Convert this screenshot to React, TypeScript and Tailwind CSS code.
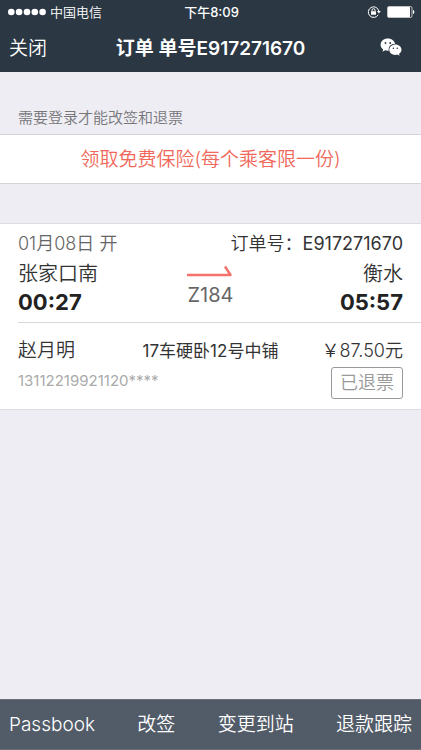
import React from "react";

const actions = ["Passbook", "改签", "变更到站", "退款跟踪"];

function StatusBar() {
  return (
    <div className="grid h-6 grid-cols-3 items-center pr-1.5 pl-2 text-[13px] leading-5">
      <div className="flex items-center gap-1">
        <svg viewBox="0 0 38 8" className="h-2 w-[38px] fill-white" aria-hidden="true">
          <circle cx="3.3" cy="4" r="3.3" />
          <circle cx="11.1" cy="4" r="3.3" />
          <circle cx="19" cy="4" r="3.3" />
          <circle cx="26.8" cy="4" r="3.3" />
          <circle cx="34.6" cy="4" r="3.3" />
        </svg>
        <span>中国电信</span>
      </div>
      <div className="text-center font-medium">下午8:09</div>
      <div className="flex items-center justify-end gap-1.5">
        <svg viewBox="0 0 14 14" className="size-3.5" fill="none" aria-hidden="true">
          <path d="M11.2 9.8A5.3 5.3 0 1 1 11.8 6" stroke="#fff" strokeWidth="1" />
          <path d="M10 6h3.8l-1.9 2.5z" fill="#fff" />
          <rect x="4" y="6.2" width="5" height="3.6" rx=".4" fill="#fff" />
          <path d="M5 6.4V5.2a1.5 1.5 0 0 1 3 0v1.2" stroke="#fff" strokeWidth="1" />
        </svg>
        <svg viewBox="0 0 28 12" className="h-3 w-7" fill="none" aria-hidden="true">
          <rect x=".5" y=".5" width="24.5" height="11" rx="1.5" stroke="#fff" strokeOpacity=".7" />
          <rect x="1" y="1" width="22" height="10" rx=".5" fill="#fff" />
          <path d="M26 4c1.8.4 1.8 3.6 0 4z" fill="#fff" />
        </svg>
      </div>
    </div>
  );
}

function WechatIcon() {
  return (
    <svg viewBox="0 0 22 18" className="h-[18px] w-[22px]" aria-hidden="true">
      <path
        d="M7.8.5C3.8.5.6 3.2.6 6.7c0 2 1 3.6 2.6 4.7l-.7 2.3 2.700-1.400c.9.3 1.700.4 2.600.4h1C8 8.800 10.800 5.700 15.200 5.800 14.400 2.700 11.400.5 7.800.5z"
        fill="#fff"
      />
      <path
        d="M21.5 11.7c0-2.900-2.700-5.200-6.100-5.200s-6.100 2.300-6.100 5.200 2.700 5.200 6.100 5.200c.7 0 1.400-.1 2-.3l2.100 1.100-.5-1.900c1.500-.9 2.500-2.400 2.500-4.100z"
        fill="#fff"
      />
      <g fill="#2b3743">
        <circle cx="5.5" cy="5" r=".9" />
        <circle cx="10.2" cy="5" r=".9" />
        <circle cx="13.4" cy="10.2" r=".8" />
        <circle cx="17.3" cy="10.2" r=".8" />
      </g>
    </svg>
  );
}

export default function App() {
  return (
    <div className="flex min-h-screen flex-col bg-[#eeedf3] font-['Inter','Noto_Sans_CJK_SC',sans-serif] font-[350] text-[#333]">
      <header className="bg-[#2b3743] text-white">
        <StatusBar />
        <nav className="flex h-12 items-center justify-between px-[9px] pt-0.5 text-[19px]">
          <button type="button" className="w-12 text-left">关闭</button>
          <h1 className="font-semibold">订单 单号E917271670</h1>
          <button type="button" aria-label="微信" className="flex w-12 justify-end pr-2.5 pb-1">
            <WechatIcon />
          </button>
        </nav>
      </header>

      <main className="flex-1">
        <p className="px-[18px] pt-[34px] pb-1 text-[15px] leading-6 text-[#77777b]">需要登录才能改签和退票</p>
        <a
          href="#insurance"
          className="block border-y border-[#d5d4d9] bg-white pt-0.5 text-center text-[19px] leading-[46px] text-[#f0685a]"
        >
          领取免费保险(每个乘客限一份)
        </a>

        <section className="mt-[39px] border-y border-[#dddce1] bg-white">
          <div className="ml-[18px] border-b border-[#d8d8d8] pt-2 pr-[18px] pb-2">
            <div className="flex justify-between text-lg leading-6">
              <span className="text-[#666]">01月08日 开</span>
              <span>
                订单号：<span className="font-normal">E917271670</span>
              </span>
            </div>
            <div className="flex justify-between">
              <div className="w-24">
                <div className="pt-0.5 text-xl leading-8">张家口南</div>
                <div className="text-[22px] leading-6 font-bold text-[#222]">00:27</div>
              </div>
              <div className="flex flex-col items-center pt-2">
                <svg viewBox="0 0 46 14" className="h-3.5 w-[46px]" fill="none" aria-hidden="true">
                  <path d="M0 11h43.5L38 2.5" stroke="#f4726c" strokeWidth="2.5" strokeLinejoin="round" />
                </svg>
                <span className="pt-0.5 text-xl leading-[30px] font-normal text-[#666]">Z184</span>
              </div>
              <div className="w-24 text-right">
                <div className="pt-0.5 text-xl leading-8">衡水</div>
                <div className="text-[22px] leading-6 font-bold text-[#222]">05:57</div>
              </div>
            </div>
          </div>

          <div className="px-[18px] pt-3 pb-2.5">
            <div className="flex items-center justify-between leading-8">
              <span className="w-24 text-[19px]">赵月明</span>
              <span className="text-[17px] font-normal">17车硬卧12号中铺</span>
              <span className="flex w-24 justify-end text-lg leading-8 whitespace-nowrap">￥87.50元</span>
            </div>
            <div className="flex items-start justify-between">
              <span className="pt-0.5 text-[15px] leading-6 font-normal text-[#aaa]">13112219921120****</span>
              <span className="rounded-[3px] border border-[#999] px-2 text-lg leading-[30px] text-[#999]">
                已退票
              </span>
            </div>
          </div>
        </section>
      </main>

      <footer className="flex h-[51px] items-center justify-between border-y border-[#6b6e73] bg-[#525b68] px-[9px] pt-0.5 text-[19px] text-white">
        {actions.map((a) => (
          <button key={a} type="button">{a}</button>
        ))}
      </footer>
    </div>
  );
}
